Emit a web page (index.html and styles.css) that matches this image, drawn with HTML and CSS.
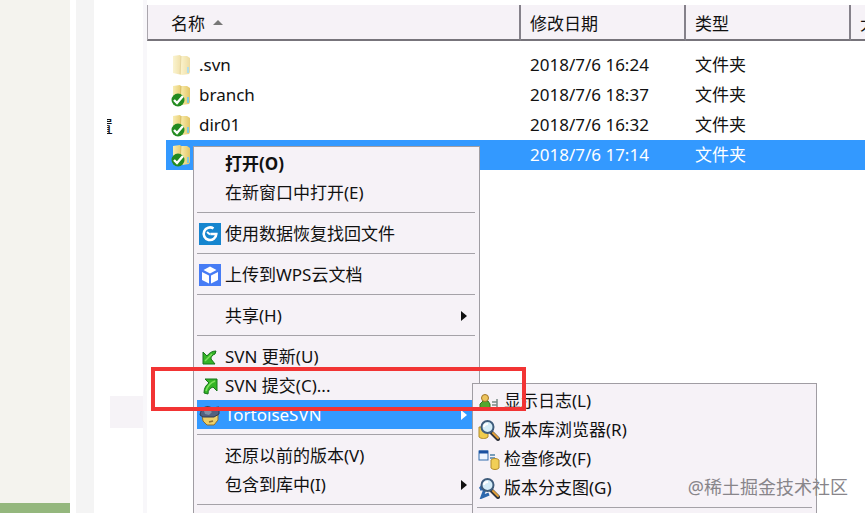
FILE: index.html
```
<!DOCTYPE html>
<html lang="zh-CN">

<head>
    <meta charset="UTF-8">
    <meta name="viewport" content="width=device-width, initial-scale=1.0">
    <title>TortoiseSVN</title>
    <link rel="stylesheet" href="styles.css">
</head>

<body>
    <svg class="defs" width="0" height="0">
        <defs>
            <linearGradient id="folder-fill" x1="0" y1="0" x2="1" y2="0">
                <stop offset="0" stop-color="#f8edb2" />
                <stop offset="0.45" stop-color="#e9cf76" />
                <stop offset="0.5" stop-color="#f7e9a6" />
                <stop offset="1" stop-color="#e3c667" />
            </linearGradient>
            <symbol id="folder" viewBox="0 0 20 24">
                <path d="M2 3l7-1 1 1h6l3 2v14l-1 2-7 1-9-2z" fill="url(#folder-fill)" />
                <path d="M10 3l-1 18" stroke="#d8bd66" stroke-width="1" />
                <path d="M17 14v6" stroke="#80c8dc" stroke-width="2" />
            </symbol>
            <symbol id="folder-ok" viewBox="0 0 20 24">
                <use href="#folder" width="20" height="24" />
                <circle cx="7" cy="17" r="6.500" fill="#238b20" />
                <path d="M3 17l3 3 6-7" fill="none" stroke="#fff" stroke-width="2.400" />
            </symbol>
            <symbol id="lens" viewBox="0 0 22 22">
                <path d="M13 13l7 7" stroke="#30343c" stroke-width="4" stroke-linecap="round" />
                <path d="M15 14l5 5" stroke="#e3a13a" stroke-width="2" stroke-linecap="round" />
                <circle cx="9.500" cy="8" r="6" fill="#d5edf8" stroke="#3f5c7b" stroke-width="2" />
                <path d="M6 8c0-2 2-3 4-3" fill="none" stroke="#fff" stroke-width="2" />
            </symbol>
        </defs>
    </svg>
    <div class="desktop">
        <aside class="backdrop"></aside>
        <div class="gutter"></div>
        <nav class="nav-pane">
            <span class="nav-label">置</span>
            <div class="nav-selected"></div>
        </nav>
        <main class="file-pane">
            <table class="files">
                <colgroup>
                    <col class="col-edge">
                    <col class="col-name">
                    <col class="col-date">
                    <col class="col-type">
                    <col class="col-size">
                </colgroup>
                <thead>
                    <tr>
                        <th colspan="2" class="name-head">名称<svg class="sort" viewBox="0 0 10 5"><path d="M0 5l5-5 5 5z" fill="#777" /></svg></th>
                        <th>修改日期</th>
                        <th>类型</th>
                        <th>大小</th>
                    </tr>
                </thead>
                <tbody>
                    <tr>
                        <td></td>
                        <td><div class="file"><svg class="file-icon faded"><use href="#folder" /></svg>.svn</div></td>
                        <td>2018/7/6 16:24</td>
                        <td>文件夹</td>
                        <td></td>
                    </tr>
                    <tr>
                        <td></td>
                        <td><div class="file"><svg class="file-icon"><use href="#folder-ok" /></svg>branch</div></td>
                        <td>2018/7/6 18:37</td>
                        <td>文件夹</td>
                        <td></td>
                    </tr>
                    <tr>
                        <td></td>
                        <td><div class="file"><svg class="file-icon"><use href="#folder-ok" /></svg>dir01</div></td>
                        <td>2018/7/6 16:32</td>
                        <td>文件夹</td>
                        <td></td>
                    </tr>
                    <tr class="selected">
                        <td></td>
                        <td><div class="file"><svg class="file-icon"><use href="#folder-ok" /></svg></div></td>
                        <td>2018/7/6 17:14</td>
                        <td>文件夹</td>
                        <td></td>
                    </tr>
                </tbody>
            </table>
        </main>

        <div class="menu context-menu">
            <button class="item default"><span class="icon"></span>打开(O)</button>
            <button class="item"><span class="icon"></span>在新窗口中打开(E)</button>
            <hr>
            <button class="item">
                <svg class="icon" viewBox="0 0 22 22">
                    <rect width="22" height="22" fill="#1685cf" />
                    <path d="M14.500 5.500A6.300 6.300 0 1 0 17.300 11h-6" fill="none" stroke="#fff" stroke-width="2.600" />
                    <path d="M8 9l3 2.500" stroke="#fff" stroke-width="2" />
                </svg>使用数据恢复找回文件
            </button>
            <hr>
            <button class="item">
                <svg class="icon" viewBox="0 0 22 22">
                    <rect width="22" height="22" fill="#477cf5" />
                    <path d="M11 2.500l6.500 3.500-6.500 3.500L4.500 6zM3 8l7 3.500v8L3 16zM19 8l-7 3.500v8l7-3.500z" fill="#fff" />
                </svg>上传到WPS云文档
            </button>
            <hr>
            <button class="item"><span class="icon"></span>共享(H)<span class="arrow"></span></button>
            <hr>
            <button class="item">
                <svg class="icon" viewBox="0 0 22 22">
                    <path d="M4 18V6l4 4c2-3 5-5 9-5l-1 3c-3 1-4 3-4 5l4 5z" fill="#35b526" stroke="#16751a" />
                    <path d="M6 15l7-7" stroke="#7ee05c" stroke-width="1.500" />
                </svg>SVN 更新(U)
            </button>
            <button class="item">
                <svg class="icon" viewBox="0 0 22 22">
                    <path d="M18 4v12l-4-4c-3 1-5 3-5 7l-4-1c0-5 2-8 5-10L6 4z" fill="#35b526" stroke="#16751a" />
                    <path d="M16 6c-5 2-8 6-9 10" fill="none" stroke="#7ee05c" stroke-width="1.500" />
                </svg>SVN 提交(C)...
            </button>
            <button class="item active">
                <svg class="icon" viewBox="0 0 22 22">
                    <path d="M3 11h16v5l-4 5H8l-4-4z" fill="#ecd068" stroke="#8b6e32" />
                    <path d="M1 11C2 3 8 1 13 4l7-1v7l-5 3H4z" fill="#52617f" stroke="#303b50" />
                    <path d="M5 7l4-2 4 3-3 3-4-1z" fill="#8291a5" />
                    <path d="M10 18l4-1" stroke="#8b6e32" stroke-width="1.500" />
                </svg>TortoiseSVN<span class="arrow"></span>
            </button>
            <hr>
            <button class="item"><span class="icon"></span>还原以前的版本(V)</button>
            <button class="item"><span class="icon"></span>包含到库中(I)<span class="arrow"></span></button>
            <hr>
        </div>

        <div class="menu sub-menu">
            <button class="item">
                <svg class="icon" viewBox="0 0 22 22">
                    <path d="M2 19v-5l3-3h5l2 3v5z" fill="#54a82e" stroke="#34751f" />
                    <circle cx="7" cy="8" r="3.500" fill="#edc45d" stroke="#a37527" />
                    <path d="M14 12h5M14 15h5M14 18h5M19 9v10" stroke="#7a8b87" stroke-width="1.500" />
                </svg>显示日志(L)
            </button>
            <button class="item">
                <svg class="icon" viewBox="0 0 22 22">
                    <path d="M1 8h9v10c-2 2-7 2-9 0z" fill="#f0cd4d" stroke="#b18a2a" />
                    <use href="#lens" width="22" height="22" />
                </svg>版本库浏览器(R)
            </button>
            <button class="item">
                <svg class="icon" viewBox="0 0 22 22">
                    <rect x="1" y="3" width="9" height="9" fill="#edf5ff" stroke="#326dad" />
                    <path d="M1 4h9" stroke="#1950a0" stroke-width="3" />
                    <path d="M12 7h5M12 10h5" stroke="#4d81a8" stroke-width="1.500" />
                    <path d="M13 12c2-2 6-2 8 0v8c-2 2-6 2-8 0z" fill="#f1cf57" stroke="#b28b2d" />
                </svg>检查修改(F)
            </button>
            <button class="item">
                <svg class="icon" viewBox="0 0 22 22">
                    <path d="M2 12h5l-3 8 7-3M2 12l4-5" fill="none" stroke="#2e68ae" stroke-width="3" />
                    <use href="#lens" width="22" height="22" />
                </svg>版本分支图(G)
            </button>
            <hr>
        </div>

        <div class="highlight"></div>
        <div class="watermark">@稀土掘金技术社区</div>
    </div>
</body>

</html>
```
FILE: styles.css
```
body {
    margin: 0;
    font-family: "Noto Sans", "Noto Sans CJK SC", sans-serif;
    font-size: 17px;
    color: #111;
    background-color: #fff;
}

.defs {
    position: absolute;
}

.desktop {
    position: relative;
    display: flex;
    height: 100vh;
    overflow: hidden;
}

.backdrop {
    flex: 0 0 70px;
    background: linear-gradient(#94b77d, #94b77d) bottom / 100% 10px no-repeat #f4f3ee;
}

.gutter {
    flex: 0 0 18px;
    margin-left: 6px;
    background-color: #f4f4f4;
}

.nav-pane {
    flex: 0 0 53px;
    box-sizing: border-box;
    padding: 112px 0 0 13px;
    border-right: 4px solid #f8f7fa;
}

.nav-label {
    display: flex;
    justify-content: flex-end;
    width: 6px;
    line-height: 30px;
    overflow: hidden;
}

.nav-selected {
    height: 32px;
    margin: 254px 0 0 3px;
    background-color: #f6f3f7;
}

.file-pane {
    flex: 1;
    min-width: 0;
    padding-top: 5px;
}

.files {
    width: 100%;
    table-layout: fixed;
    border-collapse: separate;
    border-spacing: 0;
}

.col-edge {
    width: 19px;
}

.col-name {
    width: 355px;
}

.col-date,
.col-type {
    width: 165px;
}

.files th {
    height: 34px;
    padding: 0 0 0 9px;
    box-sizing: content-box;
    border-right: 2px solid #85818a;
    border-bottom: 2px solid #77747b;
    background-color: #f6f2f7;
    font-weight: normal;
    text-align: left;
    white-space: nowrap;
    overflow: hidden;
}

.files th:last-child {
    border-right: none;
}

.files .name-head {
    padding-left: 23px;
    border-left: 1px solid #aaa6ad;
}

.sort {
    width: 10px;
    height: 5px;
    margin-left: 8px;
    vertical-align: 5px;
}

.files tbody::before {
    content: "";
    display: table-row;
    height: 9px;
}

.files td {
    height: 30px;
    padding: 0 0 0 9px;
    line-height: 30px;
    white-space: nowrap;
}

.files td:nth-child(2) {
    padding-left: 5px;
}

.selected td {
    color: #fff;
    background-color: #3399ff;
}

.selected td:first-child {
    background-color: transparent;
}

.file {
    display: flex;
    align-items: center;
    gap: 8px;
    height: 30px;
}

.file-icon {
    width: 20px;
    height: 24px;
}

.faded {
    opacity: 0.6;
}

.menu {
    position: absolute;
    box-sizing: border-box;
    border: 1px solid #a09da3;
    background-color: #f6f2f7;
}

.context-menu {
    left: 193px;
    top: 146px;
    width: 287px;
    height: 400px;
    padding: 2px 4px 2px 3px;
}

.sub-menu {
    left: 472px;
    top: 383px;
    width: 345px;
    height: 200px;
    padding: 2px 4px;
}

.item {
    display: flex;
    align-items: center;
    gap: 4px;
    width: 100%;
    height: 29px;
    padding: 0 8px 0 2px;
    border: none;
    background: none;
    color: #111;
    font: inherit;
    line-height: 29px;
    text-align: left;
    white-space: nowrap;
}

.item.default {
    font-weight: bold;
}

.item.active {
    color: #fff;
    background-color: #3399ff;
}

.sub-menu .item {
    padding-left: 1px;
}

.icon {
    flex: 0 0 22px;
    width: 22px;
    height: 22px;
}

.arrow {
    margin-left: auto;
    border: 5px solid transparent;
    border-left: 6px solid currentColor;
    border-right: none;
}

.menu hr {
    height: 1px;
    margin: 5px 0 6px;
    border: none;
    background-color: #a5a2a8;
}

.highlight {
    position: absolute;
    left: 151px;
    top: 367px;
    width: 367px;
    height: 36px;
    border: 4px solid #f23434;
}

.watermark {
    position: absolute;
    right: 17px;
    bottom: 14px;
    font-size: 18px;
    line-height: 24px;
    color: #88858a;
}
```
